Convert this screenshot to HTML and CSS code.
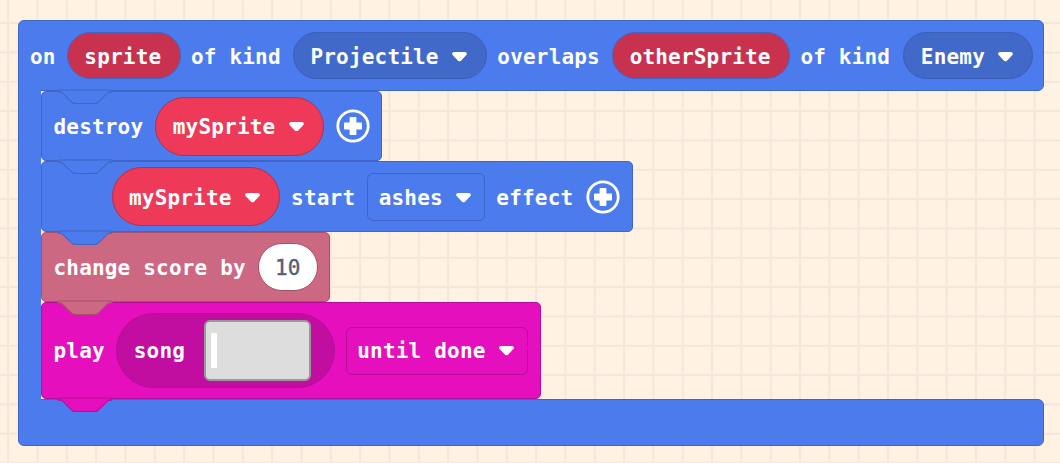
FILE: index.html
```html
<!DOCTYPE html>
<html lang="en">
<head>
<meta charset="utf-8">
<title>Blocks</title>
<link rel="stylesheet" href="styles.css">
</head>
<body>
<svg class="defs" width="0" height="0" aria-hidden="true">
  <defs>
    <path id="caret" d="M2.2 0H13.8C15.6 0 16.5 2 15.3 3.3L9.6 9.2C8.7 10.1 7.3 10.1 6.4 9.2L.7 3.3C-.5 2 .4 0 2.2 0Z"/>
    <g id="plus">
      <circle cx="17" cy="17" r="15.2" fill="none" stroke="#fff" stroke-width="2.8"/>
      <path fill="#fff" d="M14.6 8H19.4C20.1 8 20.4 8.400 20.4 9V13.600H25C25.700 13.600 26 14 26 14.600V19.400C26 20.100 25.700 20.400 25 20.400H20.400V25C20.400 25.700 20.100 26 19.400 26H14.600C13.900 26 13.600 25.700 13.600 25V20.400H9C8.400 20.400 8 20.100 8 19.400V14.600C8 14 8.400 13.600 9 13.600H13.600V9C13.600 8.400 13.900 8 14.600 8Z"/>
    </g>
    <path id="bump-fill" d="M0 0H54V2H53C51 2 50 2.500 49 3.500L41 11.500C39.500 13 38.500 13.500 36 13.500H18C15.500 13.500 14.500 13 13 11.500L5 3.500C4 2.500 3 2 1 2H0Z"/>
    <path id="bump-line" d="M0 2H1C3 2 4 2.500 5 3.500L13 11.500C14.500 13 15.500 13.500 18 13.500H36C38.500 13.500 39.500 13 41 11.500L49 3.500C50 2.500 51 2 53 2H54" fill="none"/>
  </defs>
</svg>

<main class="hat">
  <header class="hat-head row">
    <span class="word">on</span>
    <span class="pill var">sprite</span>
    <span class="word">of kind</span>
    <span class="pill kind">Projectile<svg class="caret" viewBox="0 0 16 10"><use href="#caret"/></svg></span>
    <span class="word">overlaps</span>
    <span class="pill var">otherSprite</span>
    <span class="word">of kind</span>
    <span class="pill kind last">Enemy<svg class="caret" viewBox="0 0 16 10"><use href="#caret"/></svg></span>
    <svg class="bump bump-blue bump-head" viewBox="0 0 54 15"><use href="#bump-fill"/><use href="#bump-line"/></svg>
  </header>

  <div class="hat-body">
    <div class="arm"></div>
    <div class="stack">
      <section class="block blue row h70">
        <span class="word">destroy</span>
        <span class="pill sprite">mySprite<svg class="caret" viewBox="0 0 16 10"><use href="#caret"/></svg></span>
        <svg class="plus" viewBox="0 0 34 34"><use href="#plus"/></svg>
        <svg class="bump bump-blue" viewBox="0 0 54 15"><use href="#bump-fill"/><use href="#bump-line"/></svg>
      </section>

      <section class="block blue row h71 effect-block">
        <span class="pill sprite">mySprite<svg class="caret" viewBox="0 0 16 10"><use href="#caret"/></svg></span>
        <span class="word">start</span>
        <span class="drop blue-drop">ashes<svg class="caret" viewBox="0 0 16 10"><use href="#caret"/></svg></span>
        <span class="word">effect</span>
        <svg class="plus" viewBox="0 0 34 34"><use href="#plus"/></svg>
        <svg class="bump bump-blue" viewBox="0 0 54 15"><use href="#bump-fill"/><use href="#bump-line"/></svg>
      </section>

      <section class="block rose row h70">
        <span class="word">change score by</span>
        <span class="number">10</span>
        <svg class="bump bump-rose" viewBox="0 0 54 15"><use href="#bump-fill"/><use href="#bump-line"/></svg>
      </section>

      <section class="block music row h97">
        <span class="word play">play</span>
        <span class="song">
          <span class="word">song</span>
          <span class="song-field"><span class="song-cursor"></span></span>
        </span>
        <span class="drop music-drop">until done<svg class="caret" viewBox="0 0 16 10"><use href="#caret"/></svg></span>
        <svg class="bump bump-music" viewBox="0 0 54 15"><use href="#bump-fill"/><use href="#bump-line"/></svg>
      </section>
    </div>
  </div>

  <footer class="hat-foot"></footer>
</main>
</body>
</html>
```

FILE: styles.css
```css
* { box-sizing: border-box; }

html, body { margin: 0; height: 100%; }

body {
  overflow: hidden;
  background-color: #fff2e2;
  background-image:
    linear-gradient(to right, #f3e6da 1.6px, transparent 1.6px),
    linear-gradient(to bottom, #f3e6da 1.6px, transparent 1.6px);
  background-size: 29.33px 29.33px;
  background-position: 7.2px 22.2px;
  font-family: "DejaVu Sans Mono", "Liberation Mono", monospace;
  font-weight: 700;
  font-size: 21px;
  letter-spacing: .18px;
  color: #fff;
  padding: 20px 0 0 18px;
}

.defs { position: absolute; }

.hat { width: 1026px; display: flex; flex-direction: column; }

.row { display: flex; align-items: center; }

.word { white-space: pre; line-height: 24px; padding-top: 1px; }

.hat-head {
  position: relative;
  z-index: 1;
  height: 71px;
  gap: 11.200px;
  padding: 0 10px 0 11px;
  background: #4b7bec;
  border: 1px solid #3f66c6;
  border-radius: 6px;
  justify-content: flex-start;
}

.hat-body { display: flex; }

.arm {
  position: relative;
  z-index: 3;
  width: 23px;
  margin: -6px 0;
  background: #4b7bec;
  border-left: 1px solid #3f66c6;
}

.stack { display: flex; flex-direction: column; align-items: flex-start; }

.hat-foot {
  height: 47px;
  background: #4b7bec;
  border: 1px solid #3f66c6;
  border-radius: 6px;
}

.pill, .drop {
  display: inline-flex;
  align-items: center;
  white-space: pre;
  line-height: 24px;
  padding: 1px 19px 0 16.500px;
  border: 1px solid;
}

.pill { height: 47px; border-radius: 24px; }

.pill.var { background: #c8324f; border-color: #3f66c6; padding-right: 18.500px; }

.pill.kind { background: #4069c9; border-color: #3a5fb8; }

.pill.last { margin-left: 1px; }

.pill.sprite {
  height: 59px;
  border-radius: 30px;
  background: #ee3a58;
  border-color: #b72e46;
}

.pill + .word { margin-left: -1px; }

.hat-head .pill + .word { margin-right: 1px; }

.hat-head .word,
.hat-head .pill,
.effect-block .word,
.effect-block .pill,
.effect-block .drop { padding-top: 3px; }

.caret { width: 15px; height: 9.400px; margin-left: 13.500px; fill: #fff; flex: none; }

.drop { height: 48px; border-radius: 6px; padding: 1px 13px 0 10.500px; }

.blue-drop { background: #4b7bec; border-color: #3f66c6; margin-right: -1px; }

.music-drop { background: #e50fbd; border-color: #b80c9a; margin-left: -1px; }

.plus { width: 34px; height: 34px; flex: none; }

.effect-block .plus { margin-left: 1px; }

.block {
  position: relative;
  border: 1px solid;
  border-radius: 5px;
  padding: 0 11.500px 0 11.500px;
  gap: 12px;
}

.h70 { height: 70px; }
.h71 { height: 71px; }
.h97 { height: 97px; }

.blue { background: #4b7bec; border-color: #3f66c6; }
.rose { background: #cd6883; border-color: #a5536a; }
.music { background: #e50fbd; border-color: #b80c9a; }

.effect-block { padding-left: 69.500px; }

.play { margin-right: -1px; }

.number {
  width: 60px;
  height: 48px;
  border-radius: 24px;
  background: #fff;
  border: 1px solid #a5536a;
  color: #575e75;
  font-weight: 400;
  -webkit-text-stroke: .4px #575e75;
  display: flex;
  align-items: center;
  justify-content: center;
  line-height: 24px;
  padding-top: 1px;
}

.song {
  display: flex;
  align-items: center;
  width: 219px;
  height: 75px;
  border-radius: 38px;
  background: #c20da1;
  border: 1px solid #b80c9a;
  padding-left: 17px;
  gap: 19px;
}

.song-field {
  display: flex;
  align-items: center;
  width: 107px;
  height: 61px;
  background: #ddd;
  border: 2px solid #999;
  border-radius: 6px;
  padding-left: 5px;
}

.song-cursor { width: 6px; height: 35px; background: #fff; }

.bump {
  position: absolute;
  left: 16px;
  top: 100%;
  width: 54px;
  height: 15px;
  z-index: 2;
  stroke-width: 1;
  overflow: visible;
}

.bump-head { left: 39px; }

.bump-blue { fill: #4b7bec; stroke: #3f66c6; }
.bump-rose { fill: #cd6883; stroke: #a5536a; }
.bump-music { fill: #e50fbd; stroke: #b80c9a; }
```
